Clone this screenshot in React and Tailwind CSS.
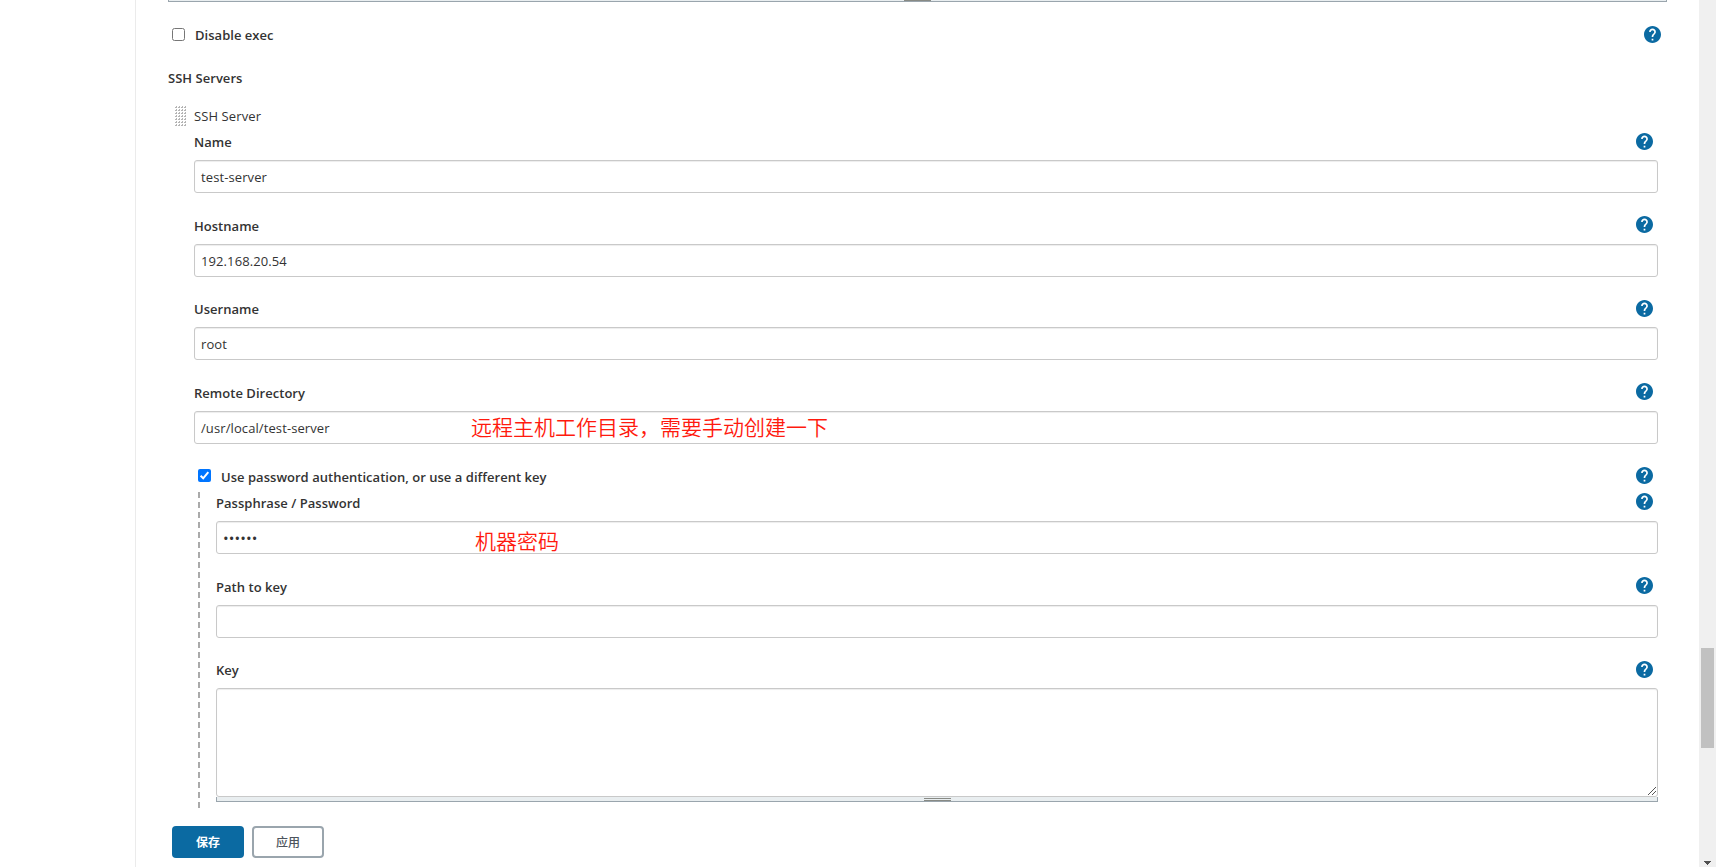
function HelpIcon({ offset = "" }) {
  return (
    <svg className={`block h-[17px] w-[17px] shrink-0 ${offset}`} viewBox="2 2 20 20" aria-hidden="true">
      <path
        fill="#0b6aa2"
        d="M12 2C6.48 2 2 6.48 2 12s4.48 10 10 10 10-4.48 10-10S17.52 2 12 2zm1 17h-2v-2h2v2zm2.07-7.75l-.9.92C13.45 12.9 13 13.5 13 15h-2v-.5c0-1.1.45-2.1 1.17-2.83l1.24-1.26c.37-.36.59-.86.59-1.41 0-1.1-.9-2-2-2s-2 .9-2 2H8c0-2.21 1.79-4 4-4s4 1.79 4 4c0 .88-.36 1.68-.93 2.25z"
      />
    </svg>
  );
}

function Label({ children }) {
  return <span className="font-semibold tracking-[0.03px] whitespace-nowrap">{children}</span>;
}

function Field({ label, children }) {
  return (
    <div className="mb-[22.67px]">
      <div className="flex h-7 items-start justify-between pr-[5.5px]">
        <Label>{label}</Label>
        <HelpIcon offset="mt-[0.5px]" />
      </div>
      {children}
    </div>
  );
}

function Input({ children, note }) {
  return (
    <div className="relative flex h-[33px] items-center rounded-[3px] border border-[#c9c9c9] px-[6px] pt-px tracking-[0.1px] shadow-[inset_0_1px_1px_rgba(0,0,0,0.075)]">
      {children}
      {note}
    </div>
  );
}

function Grip() {
  const dots = [];
  for (let y = 0; y < 7; y++) {
    for (let x = 0; x < 4; x++) {
      dots.push(<path key={`${x}-${y}`} d={`M${x * 3 + 1} ${y * 3}h1v2h-2v-1h1z`} fill="#b4b4b4" />);
    }
  }
  return (
    <svg className="block h-5 w-[11px]" viewBox="0 0 11 20" shapeRendering="crispEdges">
      {dots}
    </svg>
  );
}

export default function App() {
  return (
    <div className="flex h-[867px] w-[1716px] overflow-hidden bg-white font-['Open_Sans','Noto_Sans_CJK_SC',sans-serif] text-[13px] leading-[20px] text-[#333]">
      <div className="w-[136px] shrink-0 border-r border-[#ebebeb]" />
      <main className="flex w-[1563px] shrink-0 flex-col pr-8 pl-8">
        <div className="flex h-[2px] justify-center border-x border-b border-[#9aa5ad] bg-[#e9eef0]">
          <div className="h-px w-[27px] bg-[#888a85]" />
        </div>
        <div className="flex h-[64px] items-start justify-between pt-[23px] pr-[6px]">
          <div className="flex items-start pl-1">
            <span className="mt-[3px] mr-[10px] h-[13px] w-[13px] rounded-[2.5px] border border-[#767676]" />
            <Label>Disable exec</Label>
          </div>
          <HelpIcon offset="mt-[0.5px]" />
        </div>
        <div className="h-[40px] pt-[2px]"><Label>SSH Servers</Label></div>
        <div className="flex h-[26px] items-start pl-[7px]">
          <Grip />
          <span className="ml-2 tracking-[0.1px]">SSH Server</span>
        </div>
        <div className="pr-[9px] pl-[26px]">
          <Field label="Name"><Input>test-server</Input></Field>
          <Field label="Hostname"><Input>192.168.20.54</Input></Field>
          <Field label="Username"><Input>root</Input></Field>
          <Field label="Remote Directory">
            <Input
              note={
                <span className="absolute top-[-1px] left-[276px] text-[21px] leading-[31px] tracking-normal whitespace-nowrap text-[#ff1a0e] font-['Noto_Sans_CJK_SC',sans-serif] font-[350]">
                  远程主机工作目录，需要手动创建一下
                </span>
              }
            >
              /usr/local/test-server
            </Input>
          </Field>
          <div className="flex h-[25.33px] items-start justify-between pr-[5.5px]">
            <div className="flex items-start pl-1">
              <svg className="mt-[2px] mr-[10px] block h-[13px] w-[13px]" viewBox="0 0 13 13">
                <rect width="13" height="13" rx="2" fill="#0075ff" />
                <path d="M2.6 6.8 5.2 9.3 10.3 3.2" fill="none" stroke="#fff" strokeWidth="2" />
              </svg>
              <Label>Use password authentication, or use a different key</Label>
            </div>
            <HelpIcon offset="mt-[0.5px]" />
          </div>
          <div className="flex h-[316px] pl-1">
            <div className="w-[2px] shrink-0 bg-[repeating-linear-gradient(to_bottom,#aaa_0px,#aaa_6px,transparent_6px,transparent_10px)]" />
            <div className="min-w-0 flex-1 pt-px pl-4">
              <Field label="Passphrase / Password">
                <Input
                  note={
                    <span className="absolute top-[3px] left-[258px] text-[21px] leading-[31px] tracking-normal whitespace-nowrap text-[#ff1a0e] font-['Noto_Sans_CJK_SC',sans-serif] font-[350]">
                      机器密码
                    </span>
                  }
                >
                  <span className="text-[15px] tracking-[0.1px]">••••••</span>
                </Input>
              </Field>
              <Field label="Path to key"><Input /></Field>
              <Field label="Key">
                <div className="flex h-[109px] items-end justify-end rounded-[3px] border border-[#c9c9c9] shadow-[inset_0_1px_1px_rgba(0,0,0,0.075)]">
                  <svg className="mr-px mb-px h-2 w-2" viewBox="0 0 8 8" shapeRendering="crispEdges">
                    <path d="M0 7h1v1h-1zM1 6h1v1h-1zM2 5h1v1h-1zM3 4h1v1h-1zM4 3h1v1h-1zM5 2h1v1h-1zM6 1h1v1h-1zM7 0h1v1h-1zM4 7h1v1h-1zM5 6h1v1h-1zM6 5h1v1h-1zM7 4h1v1h-1z" fill="#555" />
                  </svg>
                </div>
                <div className="flex h-[5px] justify-center border-x border-b border-[#9aa5ad] bg-[#e9eef0]">
                  <div className="mt-px flex h-[3px] w-[27px] flex-col justify-between">
                    <div className="h-px bg-[#888a85]" />
                    <div className="h-px bg-[#888a85]" />
                  </div>
                </div>
              </Field>
            </div>
          </div>
        </div>
        <div className="mt-[18px] flex gap-2 pl-1 text-[12px]">
          <button className="h-8 w-[72px] rounded-[4px] bg-[#0b6aa2] pt-[2px] font-bold text-white">保存</button>
          <button className="h-8 w-[72px] rounded-[4px] border-2 border-[#9aa5ad] pt-[2px] font-medium text-[#4d545d]">应用</button>
        </div>
      </main>
      <div className="flex w-[17px] shrink-0 flex-col items-center bg-[#f0f0f0] pt-[648px]">
        <div className="h-[100px] w-[13px] bg-[#c1c1c1]" />
        <svg className="mt-[113px] h-1 w-[7px]" viewBox="0 0 7 4" shapeRendering="crispEdges">
          <path d="M0 0h7v1h-1v1h-1v1h-1v1h-1v-1h-1v-1h-1v-1h-1z" fill="#505050" />
        </svg>
      </div>
    </div>
  );
}
